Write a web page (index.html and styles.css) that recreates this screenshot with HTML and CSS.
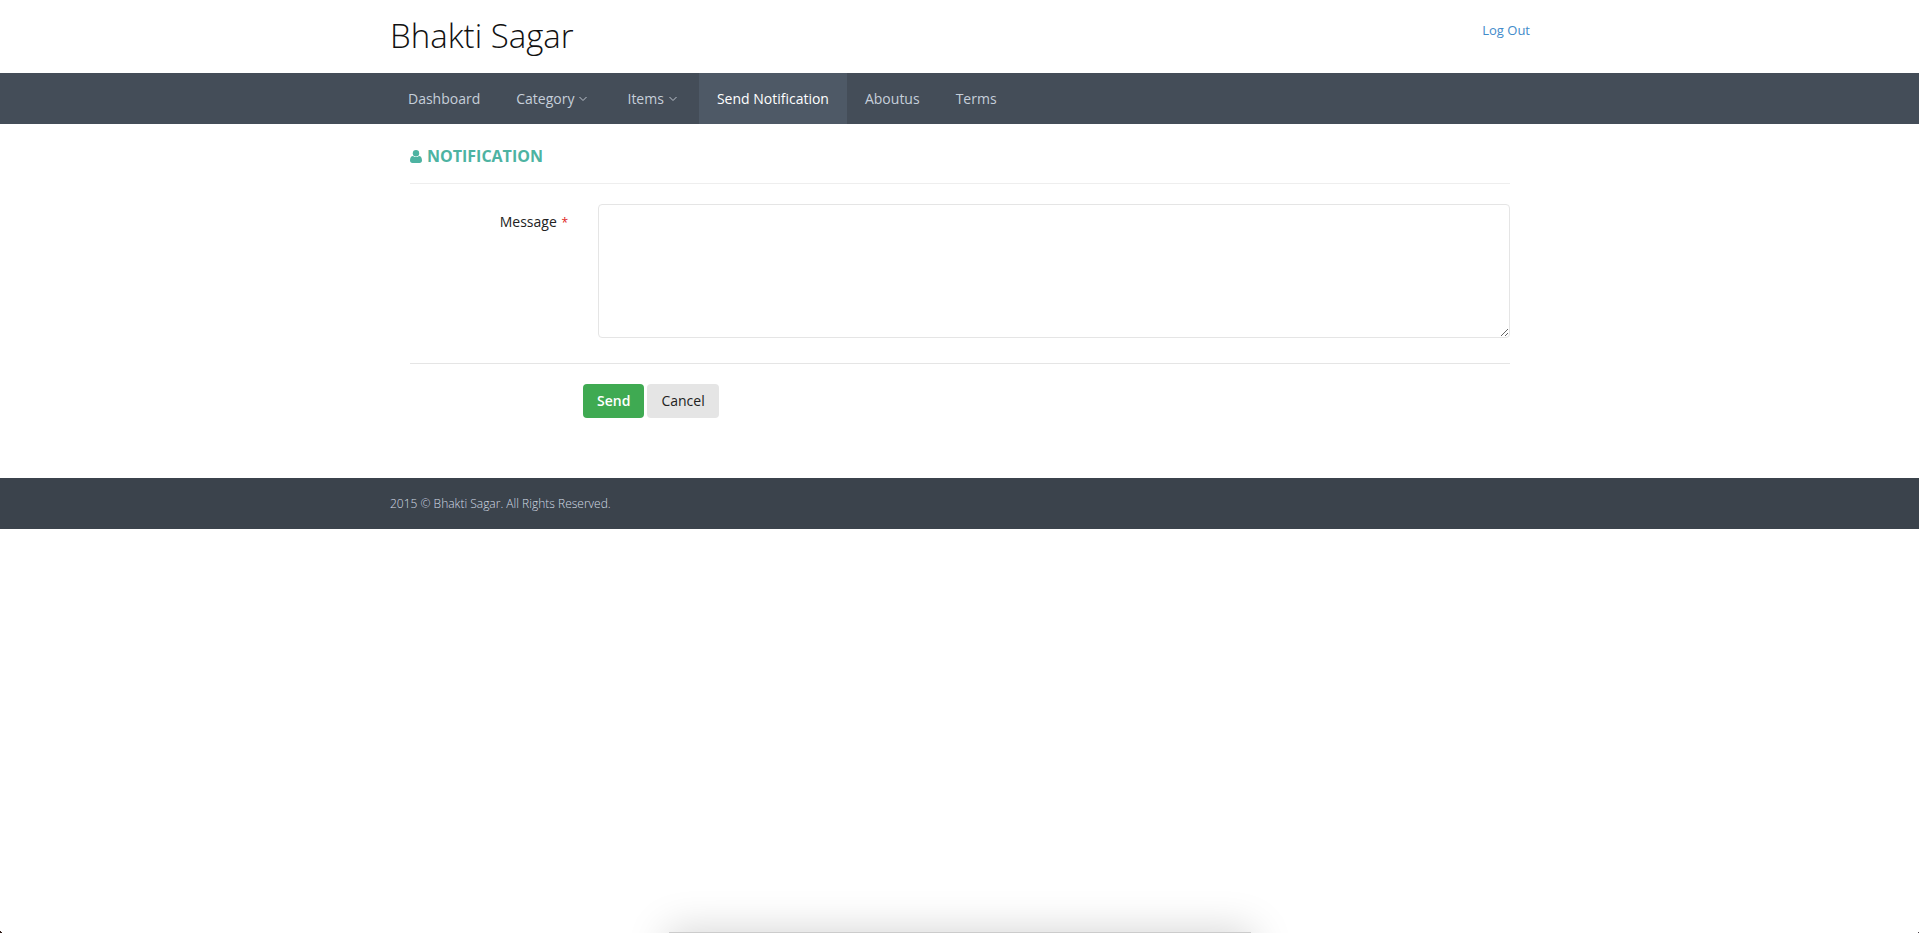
FILE: index.html
```html
<!DOCTYPE html>
<html lang="en">
<head>
<meta charset="utf-8">
<title>Bhakti Sagar</title>
<link rel="stylesheet" href="styles.css">
</head>
<body>
<header class="header">
  <div class="container header-inner">
    <h1 class="brand">Bhakti Sagar</h1>
    <a class="logout" href="#">Log Out</a>
  </div>
</header>
<nav class="nav">
  <ul class="container nav-list">
    <li><a class="nav-link" href="#">Dashboard</a></li>
    <li><a class="nav-link nav-drop" href="#">Category <svg class="caret" viewBox="0 0 8 6" aria-hidden="true"><path d="M.5 1 4 4.5 7.5 1"/></svg></a></li>
    <li><a class="nav-link nav-drop" href="#">Items <svg class="caret" viewBox="0 0 8 6" aria-hidden="true"><path d="M.5 1 4 4.5 7.5 1"/></svg></a></li>
    <li><a class="nav-link active" href="#" aria-current="page">Send Notification</a></li>
    <li><a class="nav-link" href="#">Aboutus</a></li>
    <li><a class="nav-link" href="#">Terms</a></li>
  </ul>
</nav>
<main class="container">
  <form class="panel">
    <h2 class="panel-title">
      <svg class="user" viewBox="0 0 12 13" aria-hidden="true"><circle cx="6" cy="3.2" r="3.2"/><path d="M3.1 5.9C1 6 0 7.600 0 10.500 0 12.100 1 13 2.400 13h7.200C11 13 12 12.100 12 10.500 12 7.600 11 6 8.900 5.900 8.100 6.700 7.100 7.100 6 7.100S3.900 6.700 3.100 5.900Z"/></svg>
      NOTIFICATION
    </h2>
    <div class="form-row">
      <label class="label" for="message">Message <span class="required">*</span></label>
      <textarea class="message" id="message" name="message" required></textarea>
    </div>
    <div class="actions">
      <button class="btn btn-send" type="submit">Send</button>
      <button class="btn btn-cancel" type="button">Cancel</button>
    </div>
  </form>
</main>
<footer class="footer">
  <div class="container">2015 © Bhakti Sagar. All Rights Reserved.</div>
</footer>
<div class="dock-shadow"></div>
<div class="corner corner-left"></div>
<div class="corner corner-right"></div>
</body>
</html>
```
FILE: styles.css
```css
* { box-sizing: border-box; }

body {
  margin: 0;
  background: #fff;
  color: #222;
  font-family: "Open Sans", sans-serif;
  font-size: 14px;
  line-height: 20px;
}

.container {
  width: 100%;
  max-width: 1141px;
  margin: 0 auto;
  padding: 0 0 0 1px;
}

.header-inner {
  display: flex;
  justify-content: space-between;
  align-items: flex-start;
  padding-bottom: 13px;
}

.brand {
  margin: 12px 0 0;
  color: #111;
  font-size: 33px;
  font-weight: 300;
  line-height: 48px;
}

.logout {
  margin-top: 20px;
  color: #428bca;
  font-size: 13px;
  text-decoration: none;
}

.nav { background: #444d58; }

.nav-list {
  display: flex;
  list-style: none;
}

.nav-link {
  display: flex;
  align-items: center;
  gap: 5px;
  padding: 16px 18px 15px;
  color: #c6cfda;
  font-weight: 500;
  text-decoration: none;
}

.nav-drop { padding-right: 22px; }

.nav-link.active {
  background: #4e5966;
  color: #fff;
  font-weight: 500;
}

.caret {
  width: 8px;
  height: 6px;
  fill: none;
  stroke: #bcc2cb;
}

.panel { padding: 20px 20px 60px; }

.panel-title {
  display: flex;
  align-items: center;
  gap: 5px;
  margin: 0 0 20px;
  padding: 2px 0 17px;
  border-bottom: 1px solid #eee;
  color: #4db3a2;
  font-size: 16px;
  font-weight: 700;
  line-height: 20px;
}

.user {
  width: 12px;
  height: 13px;
  fill: #4db3a2;
}

.form-row {
  display: grid;
  grid-template-columns: 158px 1fr;
  column-gap: 30px;
  padding-bottom: 25px;
  border-bottom: 1px solid #e5e5e5;
}

.label {
  padding-top: 8px;
  text-align: right;
}

.required {
  margin-left: 1px;
  color: #e02222;
  font-size: 12px;
}

.message {
  display: block;
  width: 100%;
  height: 134px;
  padding: 6px 12px;
  border: 1px solid #e5e5e5;
  border-radius: 4px;
  background: #fff;
  font: inherit;
}

.actions {
  display: flex;
  gap: 3px;
  padding: 20px 0 0 173px;
}

.btn {
  padding: 7px 14px;
  border: 0;
  border-radius: 4px;
  font: inherit;
}

.btn-send {
  background: #3faa52;
  color: #fff;
  font-weight: 600;
}

.btn-cancel {
  background: #e5e5e5;
  color: #222;
}

.footer {
  padding: 16px 0 15px;
  background: #3b434c;
  color: #d2dae4;
  font-size: 12px;
  font-weight: 300;
}

.dock-shadow {
  position: fixed;
  top: calc(100vh - 1px);
  left: 50%;
  width: 582px;
  height: 60px;
  background: #ccc;
  box-shadow: 0 0 40px 2px rgba(0, 0, 0, .17);
  transform: translateX(-50%);
}

.corner {
  position: fixed;
  bottom: 0;
  width: 3px;
  height: 3px;
}

.corner-left {
  left: 0;
  background: linear-gradient(45deg, #301c18 50%, #fff 50%);
}

.corner-right {
  right: 0;
  width: 2px;
  height: 2px;
  background: linear-gradient(315deg, #4a4048 50%, #fff 50%);
}
```
